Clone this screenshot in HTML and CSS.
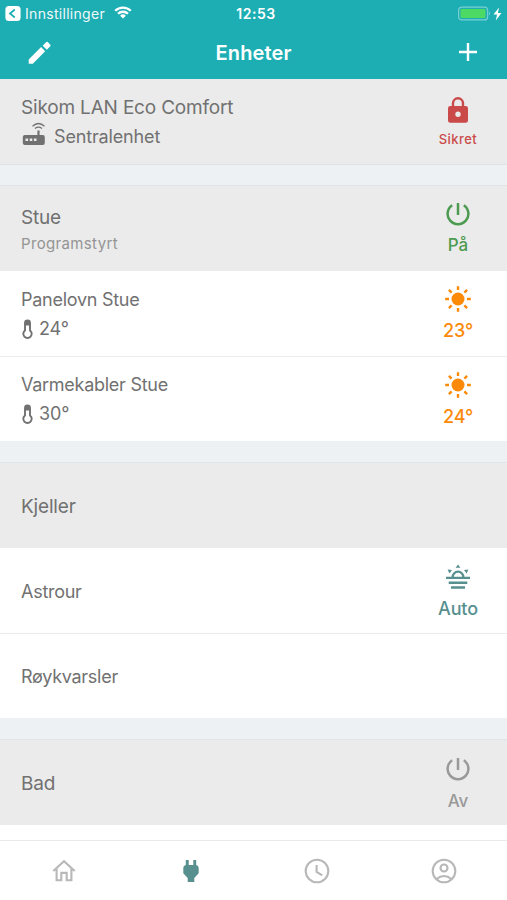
FILE: index.html
```html
<!DOCTYPE html>
<html lang="nb">
<head>
<meta charset="utf-8">
<title>Enheter</title>
<link rel="stylesheet" href="styles.css">
</head>
<body>
<svg class="defs" width="0" height="0">
  <symbol id="power" viewBox="0 0 24 24"><path d="M12 1v12M6.200 3.200A10.400 10.400 0 1 0 17.800 3.200" fill="none" stroke="currentColor" stroke-width="2.500"/></symbol>
  <symbol id="sun" viewBox="0 0 26 26"><circle cx="13" cy="13" r="6.500" fill="currentColor"/><path d="M13 .2v3.800M13 22v3.800M.2 13H4M22 13h3.800M3.900 3.900l2.700 2.700M19.400 19.400l2.700 2.700M3.900 22.100l2.700-2.700M19.400 6.600l2.700-2.700" stroke="currentColor" stroke-width="2.400"/></symbol>
  <symbol id="thermo" viewBox="0 0 12 20"><path d="M3.500 4a2.500 2.500 0 0 1 5 0v7.400a4.200 4.200 0 1 1-5 0z" fill="none" stroke="currentColor" stroke-width="1.900"/><path d="M3.500 6.500V4a2.500 2.500 0 0 1 5 0v2.500z" fill="currentColor"/></symbol>
</svg>
<div class="app">
  <header class="top">
    <div class="status">
      <div class="status-left">
        <svg width="16" height="15" viewBox="0 0 16 15"><rect x=".4" width="15.200" height="15" rx="3.500" fill="#fff"/><path d="M9.800 3.500L5 7.500l4.800 4" fill="none" stroke="#1daeb4" stroke-width="1.700"/></svg>
        <span class="back">Innstillinger</span>
        <svg class="wifi" width="18" height="13" viewBox="0 0 18 13"><g fill="none" stroke="#fff" stroke-width="2.300"><path d="M1.200 4.800a11.100 11.100 0 0 1 15.600 0M4 7.800a7.100 7.100 0 0 1 10 0"/></g><path d="M9 12.600L6.100 9.700a4.100 4.100 0 0 1 5.800 0z" fill="#fff"/></svg>
      </div>
      <span class="time">12:53</span>
      <div class="status-right">
        <svg width="46" height="16" viewBox="0 0 46 16"><rect x=".6" y="1.100" width="29" height="12.800" rx="3" fill="none" stroke="#78cfd2" stroke-width="1.200"/><rect x="2.500" y="3" width="25" height="9" rx="1.200" fill="#4cd964"/><path d="M31 5.300q2 2.200 0 4.400z" fill="#78cfd2"/><path d="M41 1.500l-5.500 7h3.500L37.800 14.500l5.700-7.500h-3.600z" fill="#fff"/></svg>
      </div>
    </div>
    <div class="nav">
      <svg class="edit" width="24" height="24" viewBox="0 0 24 24"><path d="M.7 18.600v4.100h4.100L17.200 10.200l-4.100-4.100zM22.300 5.200a1.100 1.100 0 0 0 0-1.500L19.800 1.100a1.100 1.100 0 0 0-1.500 0l-3.600 3.600 4.100 4.100z" fill="#fff"/></svg>
      <h1>Enheter</h1>
      <svg class="add" width="18" height="18" viewBox="0 0 18 18"><path d="M9 0v18M0 9h18" stroke="#fff" stroke-width="2.400"/></svg>
    </div>
  </header>

  <main class="list">
    <section>
      <div class="row group first">
        <div class="info">
          <div class="name">Sikom LAN Eco Comfort</div>
          <div class="detail central">
            <svg class="router" width="24" height="24" viewBox="0 0 24 24"><rect x="1.800" y="13" width="22" height="10" rx="2" fill="currentColor"/><path d="M17.500 8.500V14" stroke="currentColor" stroke-width="2.200"/><path d="M11.500 4.200q6-5.400 12 0M14 6.500q3.500-2.600 7 0" fill="none" stroke="currentColor" stroke-width="1.300"/><path d="M4.500 17.800h2.600M8.700 17.800h2.600M12.900 17.800h2.600" stroke="#ececec" stroke-width="2.600"/></svg>
            <span>Sentralenhet</span>
          </div>
        </div>
        <div class="state red">
          <svg width="20" height="26" viewBox="0 0 20 26"><path d="M5 10V6.300a5 5 0 0 1 10 0V10" fill="none" stroke="currentColor" stroke-width="2.400"/><path fill-rule="evenodd" d="M2.300 8.900h15.400a2.300 2.300 0 0 1 2.300 2.300v12.300a2.300 2.300 0 0 1-2.300 2.300H2.300A2.300 2.300 0 0 1 0 23.500V11.200a2.300 2.300 0 0 1 2.300-2.300zM10 14.500a2.700 2.700 0 1 0 0 5.400a2.700 2.700 0 1 0 0-5.400z" fill="currentColor"/></svg>
          <span class="small">Sikret</span>
        </div>
      </div>
    </section>

    <section class="near">
      <div class="row group">
        <div class="info"><div class="name">Stue</div><div class="sub">Programstyrt</div></div>
        <div class="state green"><svg width="24" height="24"><use href="#power"/></svg><span>På</span></div>
      </div>
      <div class="row">
        <div class="info"><div class="name">Panelovn Stue</div><div class="detail"><svg width="13" height="20"><use href="#thermo"/></svg><span>24°</span></div></div>
        <div class="state orange"><svg width="26" height="26"><use href="#sun"/></svg><span>23°</span></div>
      </div>
      <div class="row last">
        <div class="info"><div class="name">Varmekabler Stue</div><div class="detail"><svg width="13" height="20"><use href="#thermo"/></svg><span>30°</span></div></div>
        <div class="state orange"><svg width="26" height="26"><use href="#sun"/></svg><span>24°</span></div>
      </div>
    </section>

    <section>
      <div class="row group"><div class="info"><div class="name">Kjeller</div></div></div>
      <div class="row">
        <div class="info"><div class="name">Astrour</div></div>
        <div class="state teal">
          <svg width="26" height="26" viewBox="0 0 26 26"><path d="M1 13.900h24M3.700 18.700h18.600M6 23.500h14" stroke="currentColor" stroke-width="2.400"/><path d="M7.700 13a5.300 5.300 0 0 1 10.600 0" fill="none" stroke="currentColor" stroke-width="2.300"/><path d="M13 .5l2.400 3.300h-4.800zM2.600 5.600l4.400.3-2.600 3.700zM23.400 5.600l-4.400.3 2.600 3.700z" fill="currentColor"/></svg>
          <span>Auto</span>
        </div>
      </div>
      <div class="row last"><div class="info"><div class="name">Røykvarsler</div></div></div>
    </section>

    <section>
      <div class="row group">
        <div class="info"><div class="name">Bad</div></div>
        <div class="state gray"><svg width="24" height="24"><use href="#power"/></svg><span>Av</span></div>
      </div>
    </section>
  </main>

  <nav class="tabs">
    <div><svg width="24" height="24" viewBox="0 0 24 24"><path d="M1.300 12.100L12 2.200l10.700 9.900M4.600 10v11.200h4.700v-7.300h5.400v7.300h4.700V10" fill="none" stroke="currentColor" stroke-width="2.100"/></svg></div>
    <div class="active"><svg width="24" height="24" viewBox="0 0 24 24"><path d="M6.800 1h2.900v5h4.600V1h2.900v5q2.500.5 2.500 3v5.200l-4.400 4.800v4H8.700v-4l-4.400-4.800V9q0-2.500 2.500-3z" fill="currentColor"/></svg></div>
    <div><svg width="26" height="26" viewBox="0 0 26 26" fill="none" stroke="currentColor" stroke-width="2.100"><circle cx="13" cy="13" r="11.300"/><path d="M12.600 7v6.800l5.700 3.500"/></svg></div>
    <div><svg width="26" height="26" viewBox="0 0 26 26" fill="none" stroke="currentColor" stroke-width="2.100"><circle cx="13" cy="13" r="11.300"/><circle cx="13" cy="10" r="3.500"/><path d="M5.400 21q7.600-6 15.200 0"/></svg></div>
  </nav>
</div>
</body>
</html>
```

FILE: styles.css
```css
* { box-sizing: border-box; }
body { margin: 0; font-family: Inter, "Liberation Sans", sans-serif; color: #717171; }
svg { display: block; flex: none; }
.defs { position: absolute; }
.app { width: 507px; height: 900px; display: flex; flex-direction: column; overflow: hidden; background: #fff; }

.top { flex: none; height: 79px; background: #1daeb4; color: #fff; }
.status { height: 27px; display: grid; grid-template-columns: 1fr auto 1fr; align-items: center; padding: 0 3px 0 5px; }
.status-left { display: flex; align-items: center; }
.status-right { display: flex; justify-content: flex-end; }
.back { margin-left: 4px; font-size: 14px; letter-spacing: 0.3px; opacity: .93; }
.wifi { margin-left: 9px; margin-top: -2px; }
.time { font-size: 14px; font-weight: 600; letter-spacing: .5px; padding-left: 3px; }
.nav { height: 52px; display: flex; align-items: center; justify-content: space-between; padding: 0 30px 0 28px; }
h1 { margin: 0; font-size: 20px; font-weight: 600; letter-spacing: .12px; }
.edit { margin-right: -4px; margin-top: -1px; }
.add { margin-top: -2px; }

.list { flex: 1; min-height: 0; overflow: hidden; }
section + section { border-top: 21px solid #edf1f4; }
section + .near { border-top-width: 20px; }
.row { height: 86px; display: flex; justify-content: space-between; padding: 2px 9px 0 21px; border-bottom: 1px solid #ececec; }
.group { background: #ebebeb; border-top: 1px solid #e1e4e6; border-bottom: 0; }
.first { border-top: 0; border-bottom: 1px solid #dfe3e6; }
.last { height: 84px; border-bottom: 0; }
.info { display: flex; flex-direction: column; justify-content: center; }
.name { font-size: 18px; line-height: 28px; letter-spacing: -.27px; }
.group .name { font-size: 19px; letter-spacing: -.18px; }
.detail { display: flex; align-items: center; gap: 5px; font-size: 18px; line-height: 30px; letter-spacing: -.15px; }
.first .info { padding-top: 1px; }
.central { gap: 9px; }
.router { margin-top: -6px; }
.sub { font-size: 15px; line-height: 24px; letter-spacing: .35px; color: #949494; }
.state { width: 80px; display: flex; flex-direction: column; align-items: center; justify-content: center; gap: 7px; font-size: 18px; font-weight: 500; line-height: 24px; letter-spacing: -.1px; }
.state .small { font-size: 13px; letter-spacing: .45px; }
.red { color: #ca4a4a; gap: 4px; padding-top: 3px; }
.green { color: #4d9a51; font-size: 17px; }
.orange { color: #fc8908; }
.teal { color: #57908f; padding-top: 2px; }
.gray { color: #999; font-size: 17px; gap: 8px; padding-top: 2px; }

.tabs { flex: none; height: 60px; border-top: 1px solid #e9e9e9; display: grid; grid-template-columns: repeat(4, 1fr); color: #b8b8b8; }
.tabs div { display: flex; align-items: center; justify-content: center; padding: 1px 0 0 1px; }
.tabs .active { color: #57908f; }
```
